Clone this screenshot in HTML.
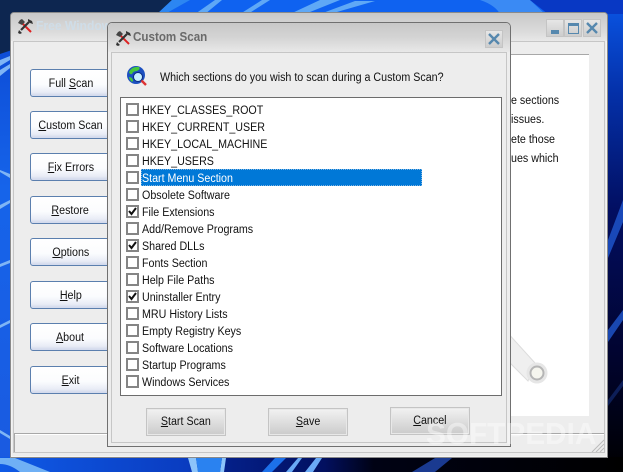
<!DOCTYPE html>
<html><head><meta charset="utf-8"><style>
html,body{margin:0;padding:0}
body{width:623px;height:472px;overflow:hidden;position:relative;font-family:"Liberation Sans",sans-serif;font-size:11.5px;color:#111;background:#0a3fb0}
div{position:absolute;box-sizing:border-box}
.t{white-space:nowrap;line-height:14px;transform:scaleX(.93);transform-origin:0 50%}
.c{display:inline-block;white-space:nowrap;transform:scaleX(.93);transform-origin:50% 50%}
.btn{left:30px;width:81px;height:28px;border:1px solid #5b7fae;border-radius:3px;background:linear-gradient(#fff 0,#fbfcfe 55%,#dfe4f2 100%);text-align:center;line-height:28px;box-shadow:inset -2px -2px 2px #d3daec}
.b2{height:28px;border:1px solid #c4c4c4;box-shadow:inset 0 0 0 1px #e8e8e8;background:linear-gradient(#f2f2f2,#cbcbcb);text-align:center;line-height:27px}
.cb{left:126px;width:13px;height:13px;border:2px solid #858585;background:#fff}
.l{left:142px}
.cb svg{position:absolute;left:0;top:0}
.wb{width:18px;height:18px;border:1px solid #c4c4c4;background:linear-gradient(#e6e6e6,#cdcdcd)}
u{text-underline-offset:1px}
</style></head><body>
<svg style="position:absolute;left:0;top:0" width="623" height="472" viewBox="0 0 623 472">
<defs>
<linearGradient id="r" x1="0" y1="0" x2="0" y2="1"><stop offset="0" stop-color="#0a56e6"/><stop offset=".2" stop-color="#0430a8"/><stop offset=".45" stop-color="#020e60"/><stop offset=".75" stop-color="#010430"/><stop offset="1" stop-color="#000"/></linearGradient>
<linearGradient id="l" x1="0" y1="0" x2="0" y2="1"><stop offset="0" stop-color="#0a45d0"/><stop offset=".4" stop-color="#1664ea"/><stop offset="1" stop-color="#1a5ae0"/></linearGradient>
<linearGradient id="bt" x1="0" y1="0" x2="1" y2="0"><stop offset="0" stop-color="#0f5ae6"/><stop offset=".3" stop-color="#0a3cc0"/><stop offset=".36" stop-color="#04208a"/><stop offset=".52" stop-color="#021060"/><stop offset=".6" stop-color="#000214"/><stop offset="1" stop-color="#000"/></linearGradient>
</defs>
<rect width="623" height="472" fill="url(#r)"/>
<rect width="12" height="472" fill="url(#l)"/>
<path d="M0 0H175L157 14H12V50L0 54Z" fill="#0d2650"/>
<path d="M172 0H530L548 14H157Z" fill="#0f62f0"/>
<path d="M172 0H190L165 14H157Z" fill="#2c86f2"/>
<path d="M195 14L215 0H222L205 14ZM240 14L262 0H270L248 14ZM290 14L320 0H340L305 14ZM320 14L355 1H375L330 14Z" fill="#5fa8f6"/>
<path d="M480 0H530L545 14H500Q495 5 480 0Z" fill="#3a8af4"/>
<path d="M530 0H623V14H548Z" fill="#0838c4"/>
<path d="M0 60L10 56V60L0 66ZM0 70L10 64V68L0 76ZM0 170L10 174V178L0 172ZM0 205L10 200V203L0 209ZM0 264L10 260V263L0 267ZM0 325L10 320V323L0 328ZM0 430L10 436V439L0 433Z" fill="#7fb5f5"/>
<path d="M608 240L623 200V222L608 258ZM608 330L623 310V320L608 342Z" fill="#1f58d0" opacity=".8"/>
<path d="M608 400L623 380V386L608 406Z" fill="#1a3a90" opacity=".5"/>
<rect y="457" width="623" height="15" fill="url(#bt)"/>
<path d="M0 458H15L50 472H20Q10 464 0 464Z" fill="#6fb0f5"/>
<path d="M188 458H196L198 472H192ZM222 458H226L224 472H220Z" fill="#8cc4fa"/>
<path d="M196 458H222L220 472H198Z" fill="#2a82f0"/>
<path d="M262 472L275 458H286L272 472Z" fill="#1c70ea"/>
<path d="M286 472L298 458H302L292 472Z" fill="#6aaaf5"/>
<path d="M305 472L316 458H322L313 472Z" fill="#6aaaf5"/>
<path d="M412 472L435 458H452L435 472Z" fill="#1a3a90"/>
</svg>

<!-- main window -->
<div style="left:10px;top:12px;width:598px;height:446px;background:#ececec;border:1px solid #8a8a8a;border-radius:4px 4px 0 0;box-shadow:inset 0 0 0 1px #f4f4f4"></div>
<div style="left:11px;top:13px;width:596px;height:28px;border-radius:3px 3px 0 0;background:linear-gradient(#c8c8c8,#dcdcdc 70%,#e8e8e8)"></div>
<div style="left:13px;top:41px;width:592px;height:412px;border:1px solid #c6c6c6;background:#ededed"></div>
<svg style="position:absolute;left:17px;top:18px" width="17" height="17" viewBox="0 0 17 17"><path d="M5 5L14 14" stroke="#d22" stroke-width="2"/><path d="M12 4L4 12" stroke="#333" stroke-width="2.2"/><path d="M1 5L3 2L5 1L8 4L5 7L3 6Z" fill="#444"/><path d="M11 1L15 3L16 6L13 5L11 3ZM2 12L5 15L3 16L1 15Z" fill="#333"/></svg>
<div class="t" style="left:36px;top:19px;font-weight:bold;font-size:13px;color:#cfdde8">Free Windows</div>
<!-- window buttons -->
<div class="wb" style="left:546px;top:19px"><div style="left:4px;top:10px;width:8px;height:4px;background:#5688ae"></div></div>
<div class="wb" style="left:564px;top:19px"><div style="left:3px;top:3px;width:11px;height:11px;border:1px solid #5688ae;border-top-width:3px"></div></div>
<div class="wb" style="left:583px;top:19px"><svg style="position:absolute;left:2px;top:2px" width="12" height="12"><path d="M1 1L11 11M11 1L1 11" stroke="#5688ae" stroke-width="2.4"/></svg></div>
<!-- right panel -->
<div style="left:500px;top:54px;width:89px;height:362px;background:#fff;border-top:1px solid #a8a8a8"></div>
<div class="t" style="left:511px;top:94px">e sections</div>
<div class="t" style="left:511px;top:113px">issues.</div>
<div class="t" style="left:511px;top:133px">ete those</div>
<div class="t" style="left:511px;top:152px">ues which</div>
<svg style="position:absolute;left:505px;top:325px" width="50" height="65" viewBox="0 0 50 65"><path d="M0 5L30 38L23 56L0 33Z" fill="#efefef" stroke="#dcdcdc"/><circle cx="32" cy="48" r="10.5" fill="#e6e6e6"/><circle cx="32" cy="48" r="6.5" fill="#f5f5ee" stroke="#b5b5b5" stroke-width="2"/></svg>
<div style="left:14px;top:433px;width:590px;height:1px;background:#a8a8a8"></div>
<div style="left:14px;top:434px;width:1px;height:18px;background:#a8a8a8"></div>
<div style="left:15px;top:434px;width:589px;height:1px;background:#fff"></div>
<svg style="position:absolute;left:590px;top:438px" width="14" height="14"><path d="M14 2L2 14M14 6L6 14M14 10L10 14" stroke="#bbb"/></svg>

<!-- left buttons -->
<div class="btn" style="top:69px"><span class="c">Full <u>S</u>can</span></div>
<div class="btn" style="top:111px"><span class="c"><u>C</u>ustom Scan</span></div>
<div class="btn" style="top:153px"><span class="c"><u>F</u>ix Errors</span></div>
<div class="btn" style="top:196px"><span class="c"><u>R</u>estore</span></div>
<div class="btn" style="top:238px"><span class="c"><u>O</u>ptions</span></div>
<div class="btn" style="top:281px"><span class="c"><u>H</u>elp</span></div>
<div class="btn" style="top:323px"><span class="c"><u>A</u>bout</span></div>
<div class="btn" style="top:366px"><span class="c"><u>E</u>xit</span></div>

<!-- dialog -->
<div style="left:107px;top:22px;width:404px;height:425px;background:#ededed;border:1px solid #707070;border-radius:5px 5px 0 0"></div>
<div style="left:108px;top:23px;width:402px;height:29px;border-radius:4px 4px 0 0;background:linear-gradient(#c8c8c8,#d4d4d4 50%,#e8e8e8)"></div>
<div style="left:111px;top:52px;width:396px;height:391px;border:1px solid #c6c6c6;background:#ededed"></div>
<svg style="position:absolute;left:115px;top:30px" width="17" height="17" viewBox="0 0 17 17"><path d="M5 5L14 14" stroke="#d22" stroke-width="2"/><path d="M12 4L4 12" stroke="#333" stroke-width="2.2"/><path d="M1 5L3 2L5 1L8 4L5 7L3 6Z" fill="#444"/><path d="M11 1L15 3L16 6L13 5L11 3ZM2 12L5 15L3 16L1 15Z" fill="#333"/></svg>
<div class="t" style="left:133px;top:30px;font-weight:bold;font-size:12.5px;color:#6a6a6a">Custom Scan</div>
<div class="wb" style="left:485px;top:30px"><svg style="position:absolute;left:2px;top:2px" width="12" height="12"><path d="M1 1L11 11M11 1L1 11" stroke="#5688ae" stroke-width="2.4"/></svg></div>
<svg style="position:absolute;left:126px;top:65px" width="22" height="22" viewBox="0 0 22 22"><circle cx="10" cy="10" r="9" fill="#1c50c0"/><path d="M3 7Q6 1 13 2Q15 4 11 6Q7 6 6 9Q4 10 3 7ZM3 12Q6 12 7 15Q7 18 5 16Q3 14 3 12Z" fill="#46c83c"/><circle cx="12" cy="12" r="4.5" fill="#c6f0ff" stroke="#0a2a80"/><path d="M15.5 15.5L20 20" stroke="#d33" stroke-width="2.4"/></svg>
<div class="t" style="left:160px;top:71px">Which sections do you wish to scan during a Custom Scan?</div>

<!-- list -->
<div style="left:120px;top:97px;width:382px;height:299px;background:#fff;border:1px solid #6c6c6c"></div>
<div style="left:141px;top:169px;width:281px;height:17px;background:#0078d7;outline:1px dotted #7fb4e0;outline-offset:-1px"></div>

<div class="cb" style="top:103px"></div><div class="t l" style="top:104px">HKEY_CLASSES_ROOT</div>
<div class="cb" style="top:120px"></div><div class="t l" style="top:121px">HKEY_CURRENT_USER</div>
<div class="cb" style="top:137px"></div><div class="t l" style="top:138px">HKEY_LOCAL_MACHINE</div>
<div class="cb" style="top:154px"></div><div class="t l" style="top:155px">HKEY_USERS</div>
<div class="cb" style="top:171px"></div><div class="t l" style="top:172px;color:#fff">Start Menu Section</div>
<div class="cb" style="top:188px"></div><div class="t l" style="top:189px">Obsolete Software</div>
<div class="cb" style="top:205px"><svg width="9" height="9"><path d="M1 4L3.5 7L8 1" fill="none" stroke="#111" stroke-width="2"/></svg></div><div class="t l" style="top:206px">File Extensions</div>
<div class="cb" style="top:222px"></div><div class="t l" style="top:223px">Add/Remove Programs</div>
<div class="cb" style="top:239px"><svg width="9" height="9"><path d="M1 4L3.5 7L8 1" fill="none" stroke="#111" stroke-width="2"/></svg></div><div class="t l" style="top:240px">Shared DLLs</div>
<div class="cb" style="top:256px"></div><div class="t l" style="top:257px">Fonts Section</div>
<div class="cb" style="top:273px"></div><div class="t l" style="top:274px">Help File Paths</div>
<div class="cb" style="top:290px"><svg width="9" height="9"><path d="M1 4L3.5 7L8 1" fill="none" stroke="#111" stroke-width="2"/></svg></div><div class="t l" style="top:291px">Uninstaller Entry</div>
<div class="cb" style="top:307px"></div><div class="t l" style="top:308px">MRU History Lists</div>
<div class="cb" style="top:324px"></div><div class="t l" style="top:325px">Empty Registry Keys</div>
<div class="cb" style="top:341px"></div><div class="t l" style="top:342px">Software Locations</div>
<div class="cb" style="top:358px"></div><div class="t l" style="top:359px">Startup Programs</div>
<div class="cb" style="top:375px"></div><div class="t l" style="top:376px">Windows Services</div>

<!-- dialog buttons -->
<div class="b2" style="left:146px;top:408px;width:80px"><span class="c"><u>S</u>tart Scan</span></div>
<div class="b2" style="left:268px;top:408px;width:80px"><span class="c"><u>S</u>ave</span></div>
<div class="b2" style="left:390px;top:407px;width:80px"><span class="c"><u>C</u>ancel</span></div>

<!-- watermark -->
<div class="t" style="left:426px;top:420px;font-size:31px;line-height:28px;font-weight:bold;color:#fff;opacity:.42;transform:scaleX(.96)">SOFTPEDIA</div>
</body></html>
